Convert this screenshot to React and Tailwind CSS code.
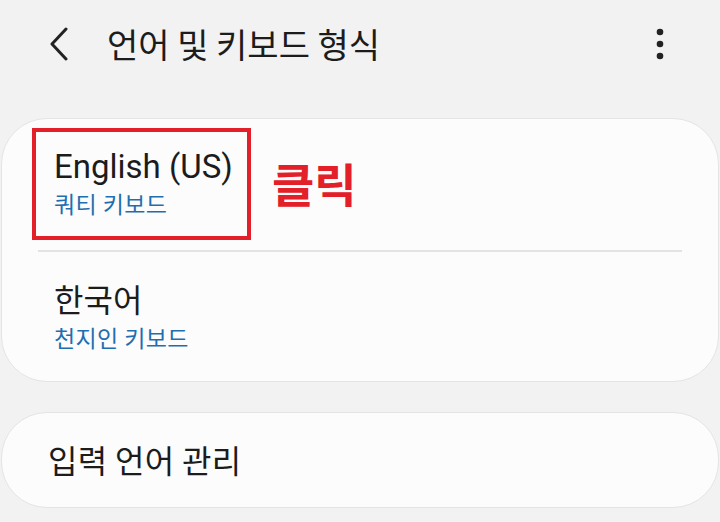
import React from "react";

const kr = { fontFamily: '"Noto Sans CJK KR", "Noto Sans", sans-serif' };
const en = { fontFamily: 'Roboto, "Noto Sans CJK KR", sans-serif' };

const BackIcon = () => (
  <svg width="22" height="34" viewBox="0 0 22 34" className="shrink-0">
    <path d="M18 2 L4 17 L18 32" fill="none" stroke="#222" strokeWidth="3" strokeLinecap="round" strokeLinejoin="round" />
  </svg>
);

const MoreIcon = () => (
  <svg width="10" height="34" viewBox="0 0 10 34">
    <circle cx="5" cy="5" r="3.3" fill="#222" />
    <circle cx="5" cy="17" r="3.3" fill="#222" />
    <circle cx="5" cy="29" r="3.3" fill="#222" />
  </svg>
);

const App = () => {
  return (
    <div className="relative w-[720px] h-[522px] bg-[#f2f2f2] overflow-hidden" style={kr}>
      {/* header */}
      <div className="flex items-center h-[88px] pl-[48px] pr-[55px]">
        <BackIcon />
        <h1 className="ml-[37px] text-[34px] leading-none text-[#1c1c1c] font-normal" style={kr}>
          언어 및 키보드 형식
        </h1>
        <div className="ml-auto">
          <MoreIcon />
        </div>
      </div>

      {/* languages card */}
      <div className="mt-[30px] mx-px bg-[#fcfcfc] border border-[#e4e4e4] rounded-[46px] h-[264px] flex flex-col">
        <div className="h-[131px] pl-[52px] pt-[27px]">
          <div className="text-[33px] leading-[42px] text-[#1c1c1c]" style={en}>English (US)</div>
          <div className="text-[23px] leading-[30px] tracking-[0.4px] text-[#1f6fb0]" style={kr}>쿼티 키보드</div>
        </div>
        <div className="mx-[36px] h-[2px] bg-[#e3e3e3]" />
        <div className="flex-1 pl-[52px] pt-[25px]">
          <div className="text-[32px] leading-[42px] text-[#1c1c1c]" style={kr}>한국어</div>
          <div className="text-[23px] leading-[30px] tracking-[0.4px] text-[#1f6fb0] mt-[3px]" style={kr}>천지인 키보드</div>
        </div>
      </div>

      {/* manage card */}
      <div className="mt-[30px] mx-px bg-[#fcfcfc] border border-[#e4e4e4] rounded-[46px] h-[96px] flex items-center pl-[46px]">
        <div className="text-[32px] leading-none text-[#1c1c1c] -mt-[2px] tracking-[0.3px]" style={kr}>입력 언어 관리</div>
      </div>

      {/* annotation */}
      <div className="absolute left-[32px] top-[128px] w-[219px] h-[112px] border-[4px] border-[#e3202a]" />
      <div
        className="absolute left-[272px] top-[152px] text-[46px] leading-[60px] font-bold text-[#e3202a]"
        style={kr}
      >
        클릭
      </div>
    </div>
  );
};

export default App;
